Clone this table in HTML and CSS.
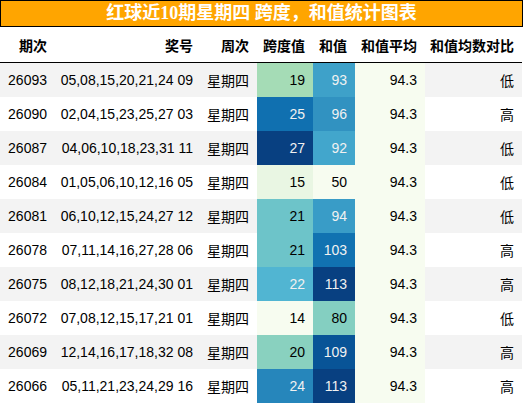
FILE: index.html
```html
<!DOCTYPE html><html lang="zh">
<head>
  <meta charset="UTF-8">
  <meta name="viewport" content="width=device-width, initial-scale=1.0">
  <title>红球近10期星期四 跨度，和值统计图表</title>
  <link rel="stylesheet" href="styles.css">
</head>
<body>
  <div class="title">红球近10期星期四 跨度，和值统计图表</div>
  <table class="stats">
    <colgroup>
      <col class="c-period"><col class="c-nums"><col class="c-day"><col class="c-span"><col class="c-sum"><col class="c-avg"><col class="c-cmp">
    </colgroup>
    <thead>
      <tr>
        <th>期次</th><th>奖号</th><th>周次</th><th>跨度值</th><th>和值</th><th>和值平均</th><th>和值均数对比</th>
      </tr>
    </thead>
    <tbody id="rows"></tbody>
  </table>
  <script>
    const data = [
      ['26093', '05,08,15,20,21,24 09', 19, 93, '低'],
      ['26090', '02,04,15,23,25,27 03', 25, 96, '高'],
      ['26087', '04,06,10,18,23,31 11', 27, 92, '低'],
      ['26084', '01,05,06,10,12,16 05', 15, 50, '低'],
      ['26081', '06,10,12,15,24,27 12', 21, 94, '低'],
      ['26078', '07,11,14,16,27,28 06', 21, 103, '高'],
      ['26075', '08,12,18,21,24,30 01', 22, 113, '高'],
      ['26072', '07,08,12,15,17,21 01', 14, 80, '低'],
      ['26069', '12,14,16,17,18,32 08', 20, 109, '高'],
      ['26066', '05,11,21,23,24,29 16', 24, 113, '高']
    ];

    // GnBu colormap stops
    const stops = ['f7fcf0','e0f3db','ccebc5','a8ddb5','7bccc4','4eb3d3','2b8cbe','0868ac','084081']
      .map(h => [0, 2, 4].map(i => parseInt(h.substr(i, 2), 16)));

    function gnbu(t) {
      const p = t * (stops.length - 1);
      const i = Math.min(Math.floor(p), stops.length - 2);
      const f = p - i;
      return stops[i].map((c, k) => Math.round(c + (stops[i + 1][k] - c) * f));
    }

    function lum(rgb) {
      const l = rgb.map(c => {
        c = c / 255;
        return c <= 0.03928 ? c / 12.92 : Math.pow((c + 0.055) / 1.055, 2.4);
      });
      return 0.2126 * l[0] + 0.7152 * l[1] + 0.0722 * l[2];
    }

    function cell(v, min, max) {
      const rgb = gnbu((v - min) / (max - min));
      const td = document.createElement('td');
      td.textContent = v;
      td.style.background = `rgb(${rgb.join(',')})`;
      if (lum(rgb) < 0.408) td.className = 'dark';
      return td;
    }

    const spans = data.map(d => d[2]), sums = data.map(d => d[3]);
    const sMin = Math.min(...spans), sMax = Math.max(...spans);
    const hMin = Math.min(...sums), hMax = Math.max(...sums);
    const avg = (sums.reduce((a, b) => a + b, 0) / sums.length).toFixed(1);

    const tbody = document.getElementById('rows');
    data.forEach(d => {
      const tr = document.createElement('tr');
      [d[0], d[1], '星期四'].forEach(t => {
        const td = document.createElement('td');
        td.textContent = t;
        tr.appendChild(td);
      });
      tr.appendChild(cell(d[2], sMin, sMax));
      tr.appendChild(cell(d[3], hMin, hMax));
      const a = document.createElement('td');
      a.className = 'avg';
      a.textContent = avg;
      tr.appendChild(a);
      const c = document.createElement('td');
      c.textContent = d[4];
      tr.appendChild(c);
      tbody.appendChild(tr);
    });
  </script>
</body>
</html>
```

FILE: styles.css
```css
body {
  margin: 0;
  background: #fff;
  color: #000;
  font-family: "Liberation Sans", "Noto Sans CJK SC", sans-serif;
  font-size: 14px;
}
.title {
  box-sizing: border-box;
  width: 523px;
  height: 27px;
  line-height: 25px;
  border: 1px solid #000;
  background: #ffa500;
  color: #fff;
  text-align: center;
  font-family: "Liberation Serif", "Noto Sans CJK SC", serif;
  font-weight: bold;
  font-size: 18px;
}
.stats {
  width: 522px;
  table-layout: fixed;
  border-collapse: collapse;
  border-spacing: 0;
}
.c-period { width: 55px; }
.c-nums { width: 146px; }
.c-day { width: 56px; }
.c-span { width: 56px; }
.c-sum { width: 42px; }
.c-avg { width: 70px; }
.c-cmp { width: 97px; }
.stats th, .stats td {
  padding: 0 8px 0 0;
  text-align: right;
  white-space: nowrap;
}
.stats th {
  height: 35px;
  font-weight: bold;
  border-bottom: 1px solid #000;
}
.stats td {
  height: 34px;
}
.stats tbody tr:nth-child(odd) {
  background: #f3f3f3;
}
.stats td.dark {
  color: #f1f1f1;
}
.stats td.avg {
  background: #f7fcf0;
}
```
